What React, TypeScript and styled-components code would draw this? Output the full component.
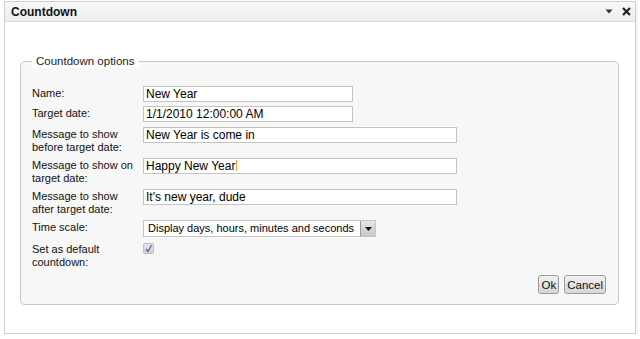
import React from 'react';
import styled, { createGlobalStyle } from 'styled-components';

const GlobalStyle = createGlobalStyle`
  html, body {
    margin: 0;
    padding: 0;
    background: #ffffff;
  }
  body {
    font-family: 'Liberation Sans', Arial, sans-serif;
  }
`;

const fields = [
  { label: ['Name:'], value: 'New Year', width: 210 },
  { label: ['Target date:'], value: '1/1/2010 12:00:00 AM', width: 210 },
  { label: ['Message to show', 'before target date:'], value: 'New Year is come in', width: 314 },
  { label: ['Message to show on', 'target date:'], value: 'Happy New Year', width: 314, caret: true },
  { label: ['Message to show', 'after target date:'], value: "It's new year, dude", width: 314 },
];

const App = () => {
  return (
    <>
      <GlobalStyle />
      <Panel>
        <Header>
          <Title>Countdown</Title>
          <HeaderTools>
            <svg width="8" height="5" viewBox="0 0 8 5">
              <path d="M0.5 0.5 L7.5 0.5 L4 4.5 Z" fill="#333" />
            </svg>
            <svg width="9" height="9" viewBox="0 0 9 9">
              <path d="M1 1 L8 8 M8 1 L1 8" stroke="#222" strokeWidth="2.2" />
            </svg>
          </HeaderTools>
        </Header>
        <Body>
          <Options>
            <Legend>Countdown options</Legend>
            <Rows>
              {fields.map((f) => (
                <Row key={f.label.join()}>
                  <Label>
                    {f.label.map((l) => (
                      <div key={l}>{l}</div>
                    ))}
                  </Label>
                  <TextBox $width={f.width}>
                    {f.value}
                    {f.caret && <Caret />}
                  </TextBox>
                </Row>
              ))}
              <Row>
                <Label>Time scale:</Label>
                <Select>
                  <SelectText>Display days, hours, minutes and seconds</SelectText>
                  <SelectButton>
                    <svg width="7" height="4" viewBox="0 0 7 4">
                      <path d="M0 0 L7 0 L3.5 4 Z" fill="#111" />
                    </svg>
                  </SelectButton>
                </Select>
              </Row>
              <Row>
                <Label>
                  <div>Set as default</div>
                  <div>countdown:</div>
                </Label>
                <Check>
                  <svg width="9" height="9" viewBox="0 0 9 9">
                    <path d="M2 5 L4 7.5 L7.5 1" stroke="#5566b8" strokeWidth="1.3" fill="none" />
                  </svg>
                </Check>
              </Row>
            </Rows>
            <Actions>
              <Button>Ok</Button>
              <Button>Cancel</Button>
            </Actions>
          </Options>
        </Body>
      </Panel>
    </>
  );
};

export default App;

const Panel = styled.div`
  box-sizing: border-box;
  margin: 1px 0 0 4px;
  width: 632px;
  height: 333px;
  border: 1px solid #cfcfcf;
  background: #fff;
  box-shadow: 1px 1px 2px rgba(0, 0, 0, 0.08);
  display: flex;
  flex-direction: column;
`;

const Header = styled.div`
  height: 19px;
  display: flex;
  align-items: center;
  justify-content: space-between;
  padding: 0 4px 0 6px;
  background: linear-gradient(#f8f8f8, #ececec);
  border-bottom: 1px solid #dcdcdc;
`;

const Title = styled.div`
  font-size: 12px;
  font-weight: bold;
  color: #111;
`;

const HeaderTools = styled.div`
  display: flex;
  align-items: center;
  gap: 9px;
`;

const Body = styled.div`
  flex: 1;
  padding: 32px 16px 0 15px;
`;

const Options = styled.fieldset`
  box-sizing: border-box;
  margin: 0;
  height: 251px;
  border: 1px solid #c8c8c8;
  border-radius: 5px;
  background: #f7f7f7;
  padding: 18px 11px 10px 11px;
  display: flex;
  flex-direction: column;
`;

const Legend = styled.legend`
  padding: 0 5px 0 4px;
  background: #fff;
  font-size: 11.5px;
  line-height: 14px;
  color: #222;
`;

const Rows = styled.div`
  display: flex;
  flex-direction: column;
  gap: 4.3px;
`;

const Row = styled.div`
  display: flex;
  align-items: flex-start;
`;

const Label = styled.div`
  width: 111px;
  padding-top: 1px;
  font-size: 11px;
  line-height: 13px;
  color: #111;
`;

const TextBox = styled.div<{ $width: number }>`
  box-sizing: border-box;
  width: ${({ $width }) => $width}px;
  height: 16px;
  border: 1px solid #c4c4c4;
  background: #fff;
  padding: 0 2px;
  font-size: 12px;
  line-height: 14px;
  color: #000;
  white-space: nowrap;
  overflow: hidden;
`;

const Caret = styled.span`
  display: inline-block;
  width: 1px;
  height: 11px;
  margin-left: 1px;
  vertical-align: -1px;
  background: #f0a040;
`;

const Select = styled.div`
  box-sizing: border-box;
  width: 233px;
  height: 17px;
  display: flex;
  border: 1px solid #c4c4c4;
  background: #fff;
`;

const SelectText = styled.div`
  flex: 1;
  padding: 0 2px 0 4px;
  font-size: 11px;
  line-height: 15px;
  color: #000;
  white-space: nowrap;
  overflow: hidden;
`;

const SelectButton = styled.div`
  width: 14px;
  display: flex;
  align-items: center;
  justify-content: center;
  border-left: 1px solid #9a9a9a;
  background: linear-gradient(#e6e6e6, #c8c8c8);
`;

const Check = styled.div`
  box-sizing: border-box;
  width: 11px;
  height: 11px;
  margin-top: 1px;
  display: flex;
  align-items: center;
  justify-content: center;
  border: 1px solid #c0c0c0;
  border-radius: 2px;
  background: linear-gradient(#e4e4e4, #d2d2d2);
`;

const Actions = styled.div`
  margin-top: auto;
  display: flex;
  justify-content: flex-end;
  gap: 5px;
  padding-right: 1px;
`;

const Button = styled.button`
  box-sizing: border-box;
  height: 19px;
  padding: 0 2px;
  border: 1px solid #9c9c9c;
  border-radius: 3px;
  background: linear-gradient(#f2f2f2, #d6d6d6);
  font-family: 'Liberation Sans', Arial, sans-serif;
  font-size: 11.5px;
  color: #111;
`;
